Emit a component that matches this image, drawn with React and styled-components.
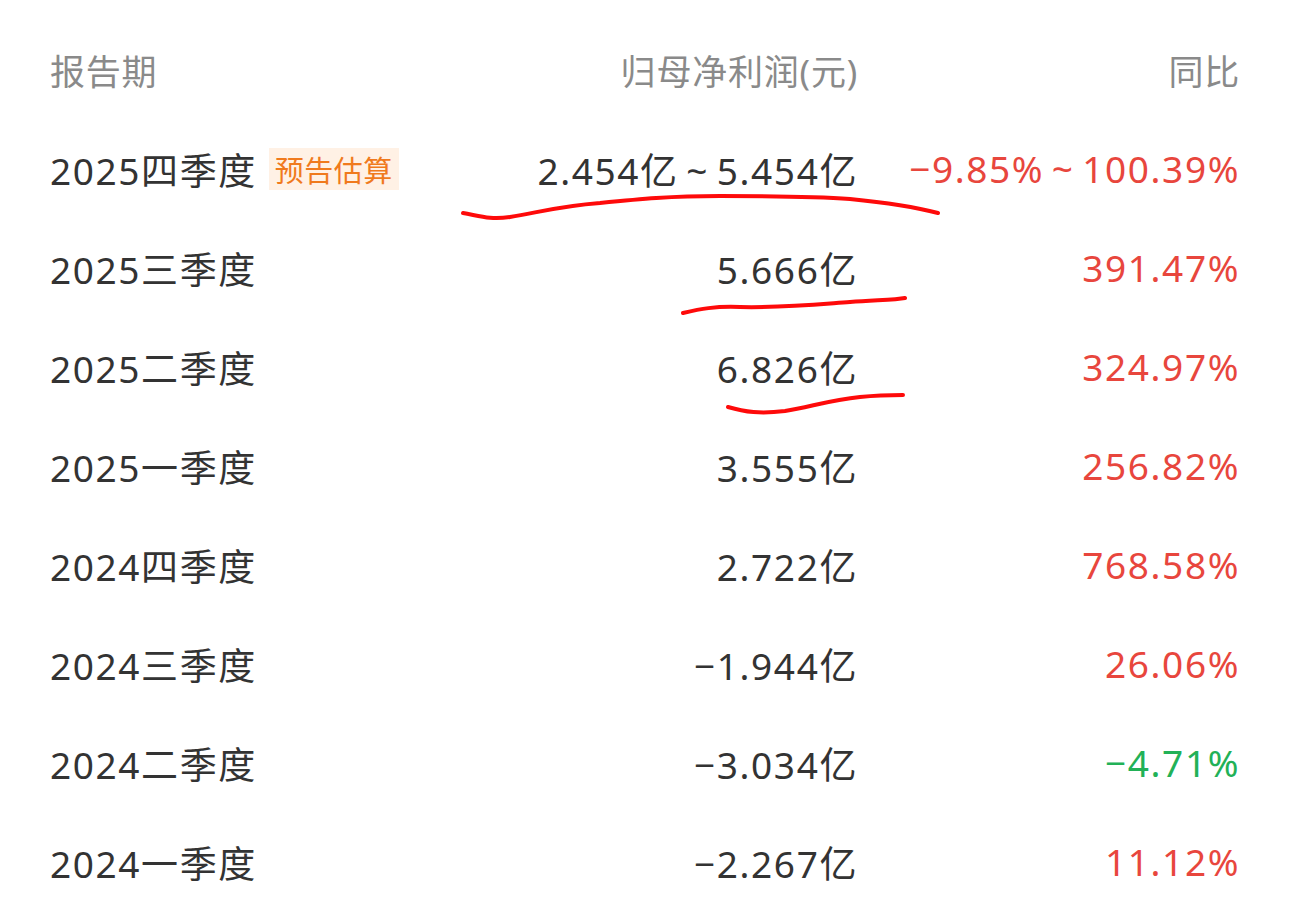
import styled, { createGlobalStyle } from 'styled-components'

const GlobalStyle = createGlobalStyle`
  html, body {
    margin: 0;
    padding: 0;
    background: #fff;
  }
  body {
    font-family: "Noto Sans", "Noto Sans CJK SC", sans-serif;
  }
`

const rows = [
  { period: '2025四季度', badge: '预告估算', profit: '2.454亿\u2009~\u20095.454亿', yoy: '−9.85%\u2009~\u2009100.39%', up: true },
  { period: '2025三季度', profit: '5.666亿', yoy: '391.47%', up: true },
  { period: '2025二季度', profit: '6.826亿', yoy: '324.97%', up: true },
  { period: '2025一季度', profit: '3.555亿', yoy: '256.82%', up: true },
  { period: '2024四季度', profit: '2.722亿', yoy: '768.58%', up: true },
  { period: '2024三季度', profit: '−1.944亿', yoy: '26.06%', up: true },
  { period: '2024二季度', profit: '−3.034亿', yoy: '−4.71%', up: false },
  { period: '2024一季度', profit: '−2.267亿', yoy: '11.12%', up: true },
]

const App = () => {
  return (
    <>
      <GlobalStyle />
      <Page>
        <Table>
          <HeadCell>报告期</HeadCell>
          <HeadCell $right>归母净利润(元)</HeadCell>
          <HeadCell $right>同比</HeadCell>
          {rows.map((r) => (
            <Row key={r.period}>
              <Cell>
                {r.period}
                {r.badge && <Badge>{r.badge}</Badge>}
              </Cell>
              <Cell $right>{r.profit}</Cell>
              <Change $up={r.up}>{r.yoy}</Change>
            </Row>
          ))}
        </Table>
        <Marks viewBox='0 0 1289 905' width='1289' height='905'>
          <path d='M463 213 C480 216 490 220 510 217 C540 212 560 206 600 203 C640 199 670 196 720 196 C770 196 810 196 850 199 C890 203 915 207 938 213' />
          <path d='M683 313 C700 309 715 306 740 307 C780 308 810 305 850 302 C875 300 895 300 905 298' />
          <path d='M728 407 C745 412 760 414 785 411 C810 407 830 400 860 397 C880 395 895 395 903 395' />
        </Marks>
      </Page>
    </>
  )
}

const Page = styled.div`
  position: relative;
  width: 1289px;
  height: 905px;
  box-sizing: border-box;
  padding: 20px 49px 0 50px;
  overflow: hidden;
`

const Table = styled.div`
  display: grid;
  grid-template-columns: 400px 408px 382px;
  grid-auto-rows: 99px;
  align-items: center;
`

const Row = styled.div`
  display: contents;
`

const HeadCell = styled.div`
  font-size: 35px;
  color: #8a8a8a;
  text-align: ${(p) => (p.$right ? 'right' : 'left')};
  letter-spacing: 0.8px;
`

const Cell = styled.div`
  display: flex;
  align-items: center;
  justify-content: ${(p) => (p.$right ? 'flex-end' : 'flex-start')};
  font-size: 37px;
  color: #333;
  letter-spacing: 1.6px;
  white-space: nowrap;
`

const Change = styled(Cell)`
  justify-content: flex-end;
  color: ${(p) => (p.$up ? '#e8463d' : '#22b157')};
`

const Badge = styled.span`
  display: inline-flex;
  align-items: center;
  margin-left: 12px;
  height: 42px;
  padding: 0 6px;
  background: #fff1e5;
  color: #f07a1d;
  font-size: 29px;
  letter-spacing: 0.5px;
`

const Marks = styled.svg`
  position: absolute;
  left: 0;
  top: 0;
  pointer-events: none;

  path {
    fill: none;
    stroke: #fe0a0a;
    stroke-width: 4;
    stroke-linecap: round;
  }
`

export default App
